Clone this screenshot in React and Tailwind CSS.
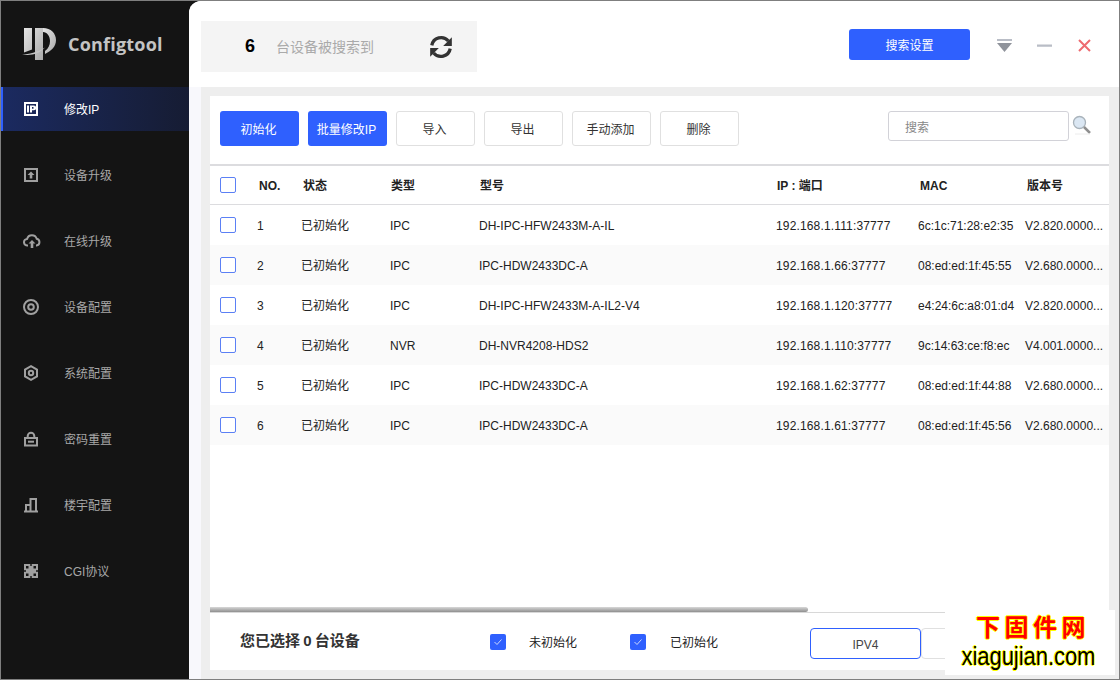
import React from "react";

const Font = "font-['Liberation_Sans','Noto_Sans_CJK_SC',sans-serif]";

function IconIP() {
  return (
    <svg width="16" height="16" viewBox="0 0 16 16">
      <path d="M1 1h14v14H1z" fill="#fff" />
      <path d="M3 3h10v10H3z" fill="#1b2858" />
      <path d="M4 4.500h2v7H4zM7 4.500h3.800a2 2 0 0 1 0 4.800H9v2.200H7zM9 6v1.800h1.500v-1.800z" fill="#fff" fillRule="evenodd" />
    </svg>
  );
}
function IconUpgrade() {
  return (
    <svg width="16" height="16" viewBox="0 0 16 16">
      <path fillRule="evenodd" d="M1 1h14v14H1zM3 3v10h10V3z" fill="#a0a0a0" />
      <path d="M8 4.500 11.500 8H9.300v3.500H6.700V8H4.500z" fill="#a0a0a0" />
    </svg>
  );
}
function IconCloud() {
  return (
    <svg width="18" height="16" viewBox="0 0 18 16" fill="none" stroke="#a0a0a0" strokeWidth="2">
      <path d="M5 12.500H4.500a3.300 3.300 0 0 1-.4-6.600A5 5 0 0 1 13.700 5.800 3.400 3.400 0 0 1 13.500 12.500H13" />
      <path d="M9 7l3.500 3.500H10.300V15H7.700v-4.500H5.500z" fill="#a0a0a0" stroke="none" />
    </svg>
  );
}
function IconTarget() {
  return (
    <svg width="16" height="16" viewBox="0 0 16 16" fill="none" stroke="#a0a0a0" strokeWidth="2">
      <circle cx="8" cy="8" r="7" />
      <circle cx="8" cy="8" r="2.800" />
    </svg>
  );
}
function IconHex() {
  return (
    <svg width="16" height="16" viewBox="0 0 16 16" fill="none" stroke="#a0a0a0" strokeWidth="2">
      <path d="M8 1.200 14 4.500v7L8 14.800 2 11.500v-7z" />
      <circle cx="8" cy="8" r="2.200" />
    </svg>
  );
}
function IconLock() {
  return (
    <svg width="16" height="16" viewBox="0 0 16 16" fill="none" stroke="#a0a0a0" strokeWidth="2">
      <path d="M2 7h12v7.500H2z" />
      <path d="M4.700 7V5a3.300 3.300 0 0 1 6.600 0v2" />
      <path d="M5 10.700h6" />
    </svg>
  );
}
function IconBars() {
  return (
    <svg width="16" height="16" viewBox="0 0 16 16" fill="none" stroke="#a0a0a0" strokeWidth="2">
      <path d="M1 14.500h14" />
      <path d="M3 14.500V8h4.500v6.500M7.500 8V2H13v12.500" />
    </svg>
  );
}
function IconGrid() {
  return (
    <svg width="16" height="16" viewBox="0 0 16 16" fill="#a0a0a0">
      <path fillRule="evenodd" d="M1 1h14v14H1zM3 3v2.500h2.500V3zM10.500 3v2.500H13V3zM3 10.500V13h2.500v-2.500zM10.500 10.500V13H13v-2.500zM7.300 1v2h1.400V1zM1 7.300v1.400h2V7.300zM13 7.300v1.400h2V7.300zM7.300 13v2h1.400v-2z" />
    </svg>
  );
}

function Logo() {
  return (
    <svg width="34" height="32" viewBox="0 0 34 32">
      <defs>
        <linearGradient id="lg" x1="0" y1="0" x2="1" y2="1">
          <stop offset="0" stopColor="#e6e6e6" />
          <stop offset="1" stopColor="#a8a8a8" />
        </linearGradient>
      </defs>
      <path d="M2 0h8v21.500L2 24.500zM13 0h8v32h-8z" fill="url(#lg)" />
      <path d="M21 0c8 0 13 5.500 13 12 0 7-5 11-11 14v-3c3.500-2.500 5-6 5-10 0-5-3-9-7-9z" fill="url(#lg)" />
      <path d="M0 26.500c7-.5 15-2 23-7-6 6.500-14 8.500-23 7z" fill="#c4c4c4" />
    </svg>
  );
}

const nav = [
  [IconIP, "修改IP", true],
  [IconUpgrade, "设备升级"],
  [IconCloud, "在线升级"],
  [IconTarget, "设备配置"],
  [IconHex, "系统配置"],
  [IconLock, "密码重置"],
  [IconBars, "楼宇配置"],
  [IconGrid, "CGI协议"],
];

const rows = [
  ["1", "已初始化", "IPC", "DH-IPC-HFW2433M-A-IL", "192.168.1.111:37777", "6c:1c:71:28:e2:35", "V2.820.0000..."],
  ["2", "已初始化", "IPC", "IPC-HDW2433DC-A", "192.168.1.66:37777", "08:ed:ed:1f:45:55", "V2.680.0000..."],
  ["3", "已初始化", "IPC", "DH-IPC-HFW2433M-A-IL2-V4", "192.168.1.120:37777", "e4:24:6c:a8:01:d4", "V2.820.0000..."],
  ["4", "已初始化", "NVR", "DH-NVR4208-HDS2", "192.168.1.110:37777", "9c:14:63:ce:f8:ec", "V4.001.0000..."],
  ["5", "已初始化", "IPC", "IPC-HDW2433DC-A", "192.168.1.62:37777", "08:ed:ed:1f:44:88", "V2.680.0000..."],
  ["6", "已初始化", "IPC", "IPC-HDW2433DC-A", "192.168.1.61:37777", "08:ed:ed:1f:45:56", "V2.680.0000..."],
];

const grid = "grid grid-cols-[37px_44px_89px_89px_297px_142px_107px_84px] items-center pl-[10px]";

function Box() {
  return <div className="w-4 h-4 rounded-[2px] border border-[#5b80f5] bg-white" />;
}

function Btn({ children, primary }) {
  return (
    <button
      className={
        "w-[79px] h-[35px] rounded-[3px] text-xs flex items-center justify-center pt-[2px] pr-[2px] " +
        (primary ? "bg-[#2f60fe] text-white" : "bg-white border border-[#e0e0e0] text-[#333]")
      }
    >
      {children}
    </button>
  );
}

function Check() {
  return (
    <div className="w-4 h-4 rounded-[2px] bg-[#2f60fe] flex items-center justify-center">
      <svg width="10" height="8" viewBox="0 0 10 8" fill="none" stroke="#c9d6ff" strokeWidth="1">
        <path d="M1.500 4 4 6.500 8.500 1.500" />
      </svg>
    </div>
  );
}

export default function App() {
  return (
    <div className={"relative w-[1120px] h-[680px] overflow-hidden bg-[#141414] border border-[#7f7f7f] flex " + Font}>
      <aside className="w-[188px] shrink-0 bg-[#141414] flex flex-col">
        <div className="h-[86px] flex items-center pl-[21px] gap-[12px]">
          <Logo />
          <span className="text-[18px] font-bold text-[#c4c4c4] font-['Open_Sans','Liberation_Sans',sans-serif] tracking-[0.2px]">Configtool</span>
        </div>
        <nav className="flex flex-col">
          {nav.map(([Icon, label, active]) => (
            <div
              key={label}
              className={
                "relative h-[44px] mb-[22px] flex items-center text-xs " +
                (active ? "bg-gradient-to-r from-[#1b2a60] to-[#161c33] text-white border-l-2 border-[#2f60fe] pl-[20px]" : "text-[#a8a8a8] pl-[22px]")
              }
            >
              <span className="w-[18px] flex justify-start"><Icon /></span>
              <span className="ml-[23px] pt-[2px]">{label}</span>
            </div>
          ))}
        </nav>
      </aside>

      <main className="flex-1 flex flex-col bg-[#f8f8fc] rounded-tl-[12px] overflow-hidden">
        <header className="h-[86px] shrink-0 bg-white flex items-start pl-[12px] pr-[28px]">
          <div className="w-[276px] h-[51px] mt-[20px] bg-[#f4f4f4] flex items-center pl-[44px]">
            <span className="text-[18px] font-bold text-black w-[31px]">6</span>
            <span className="text-sm text-[#aaaaaa] w-[153px]">台设备被搜索到</span>
            <svg className="ml-[-1px]" width="26" height="26" viewBox="0 0 24 24" fill="none" stroke="#333" strokeWidth="3">
              <path d="M3.500 10.500A8.700 8.700 0 0 1 18.800 6.500" />
              <path d="M20.500 13.500A8.700 8.700 0 0 1 5.200 17.500" />
              <path d="M22 3v8h-8zM2 21v-8h8z" fill="#333" stroke="none" />
            </svg>
          </div>
          <div className="flex-1" />
          <button className="w-[121px] h-[31px] mt-[28px] rounded-[3px] bg-[#2f60fe] text-white text-xs pt-[2px]">搜索设置</button>
          <svg className="ml-[27px] mt-[37px]" width="15" height="15" viewBox="0 0 15 15">
            <path d="M0 1h15v2H0z" fill="#b9bdc6" />
            <path d="M0 5h15L7.500 14z" fill="#8f939b" />
          </svg>
          <svg className="ml-[25px] mt-[37px]" width="15" height="15" viewBox="0 0 15 15">
            <path d="M0 6.500h15v2.200H0z" fill="#b9bdc6" />
          </svg>
          <svg className="ml-[26px] mt-[38px]" width="13" height="13" viewBox="0 0 13 13" fill="none" stroke="#ee6b70" strokeWidth="2">
            <path d="M1 1l11 11M12 1 1 12" />
          </svg>
        </header>

        <div className="flex-1 bg-[#eeeeee] ml-[12px] pl-[9px] pr-[10px] pt-[9px] pb-[9px] min-h-0">
          <div className="h-full bg-white flex flex-col">
            <div className="h-[68px] shrink-0 flex pl-[10px] pt-[15px] gap-[9px]">
              <Btn primary>初始化</Btn>
              <Btn primary>批量修改IP</Btn>
              <Btn>导入</Btn>
              <Btn>导出</Btn>
              <Btn>手动添加</Btn>
              <Btn>删除</Btn>
              <div className="ml-[140px] w-[181px] h-[30px] rounded-[3px] border border-[#d2d2d8] flex items-center pl-4 pt-[4px] text-xs text-[#888]">搜索</div>
              <svg className="ml-[-6px] mt-[4px]" width="20" height="20" viewBox="0 0 20 20" fill="none">
                <circle cx="7.500" cy="7.500" r="6" fill="#dbe7f3" stroke="#a9b3bb" strokeWidth="1.300" />
                <path d="M12 12l6 6" stroke="#8f8f8f" strokeWidth="2.500" />
                <path d="M3 19h15" stroke="#ececec" strokeWidth="1" />
              </svg>
            </div>
            <div className="h-[41px] shrink-0 border-t-2 border-b border-[#dcdcdf] box-border">
              <div className={grid + " h-full text-xs font-bold text-[#222]"}>
                <Box />
                <span className="ml-[2px] pt-[2px]">NO.</span>
                <span className="ml-[2px] pt-[2px]">状态</span>
                <span className="ml-[1px] pt-[2px]">类型</span>
                <span className="ml-[1px] pt-[2px]">型号</span>
                <span className="ml-[1px] pt-[2px]">IP : 端口</span>
                <span className="ml-[2px] pt-[2px]">MAC</span>
                <span className="ml-[2px] pt-[2px]">版本号</span>
              </div>
            </div>
            <div className="flex-1 min-h-0">
              {rows.map((r, i) => (
                <div key={r[0]} className={grid + " h-[40px] text-xs text-[#222] " + (i % 2 ? "bg-[#fafafa]" : "bg-white")}>
                  <Box />
                  {r.map((c, j) => (
                    <span key={j} className={"whitespace-nowrap pt-[2px] " + (j === 4 ? "tracking-[0.15px]" : "")}>{c}</span>
                  ))}
                </div>
              ))}
            </div>
            <div className="h-[5px] shrink-0 bg-white">
              <div className="h-full w-[598px] rounded-r-[3px] bg-gradient-to-b from-[#d8d8d8] to-[#8f8f8f]" />
            </div>
            <div className="h-[58px] shrink-0 border-t border-[#d8d8d8] flex items-center pl-[30px] relative">
              <span className="text-[15px] font-bold text-[#333] w-[250px] [word-spacing:-1px]">您已选择 0 台设备</span>
              <Check />
              <span className="ml-[23px] pt-[2px] text-xs text-[#222] w-[101px]">未初始化</span>
              <Check />
              <span className="ml-[24px] pt-[2px] text-xs text-[#222] w-[140px]">已初始化</span>
              <div className="w-[111px] h-[31px] mt-[4px] rounded-[4px] border border-[#2f60fe] text-xs text-[#444] flex items-center justify-center pt-[2px]">IPV4</div>
              <div className="w-[111px] h-[31px] mt-[4px] rounded-[4px] border border-[#e0e0e0] bg-white" />
            </div>
          </div>
        </div>
      </main>

      <div className="absolute left-[944px] top-[609px] w-[170px] h-[65px] bg-white flex flex-col items-center">
        <div className="text-[24px] leading-[28px] mt-[4px] ml-[6px] font-bold text-[#ff0000] tracking-[4.5px] [text-shadow:1px_0_#ff0,-1px_0_#ff0,0_1px_#ff0,0_-1px_#ff0]">下固件网</div>
        <div className="text-[25px] leading-[28px] mr-[4px] text-black scale-x-[0.875] whitespace-nowrap [text-shadow:1px_0_#ff0,-1px_0_#ff0,0_1px_#ff0,0_-1px_#ff0]">xiagujian.com</div>
      </div>
    </div>
  );
}
